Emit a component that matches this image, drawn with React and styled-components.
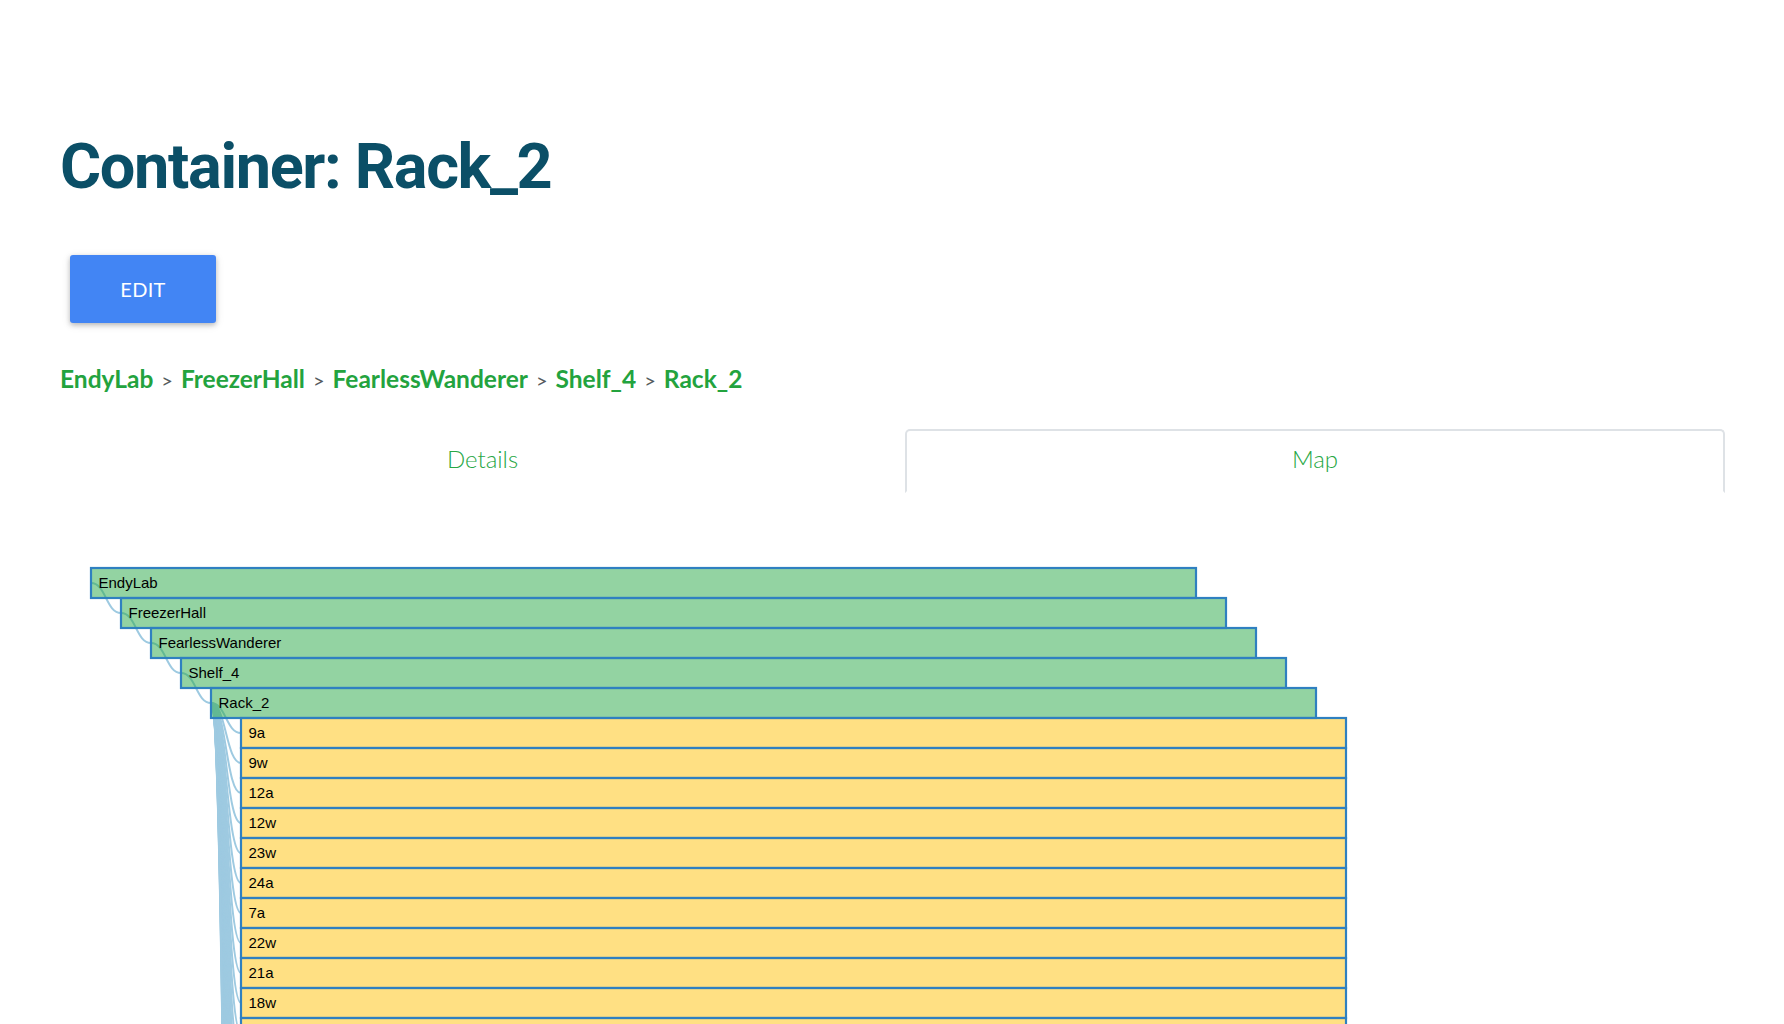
import React from "react";
import styled, { createGlobalStyle } from "styled-components";

const GlobalStyle = createGlobalStyle`
  html, body {
    margin: 0;
    padding: 0;
    background: #ffffff;
  }
  body {
    font-family: "Lato", "Liberation Sans", sans-serif;
  }
`;

const Page = styled.div`
  padding: 129px 59px 0 60px;
  box-sizing: border-box;
`;

const Title = styled.h1`
  margin: 0;
  font-family: "Roboto", "Liberation Sans", sans-serif;
  font-weight: 700;
  font-size: 63px;
  letter-spacing: -1.35px;
  line-height: 1.2;
  color: #0b4f67;
`;

const ButtonRow = styled.div`
  display: flex;
  margin-top: 50px;
  padding-left: 10px;
`;

const EditButton = styled.button`
  width: 146px;
  height: 68px;
  border: none;
  border-radius: 3px;
  background: #4285f4;
  color: #ffffff;
  font-family: "Lato", sans-serif;
  font-size: 20px;
  font-weight: 400;
  letter-spacing: 0.3px;
  box-shadow: 0 2px 5px rgba(0, 0, 0, 0.22), 0 2px 10px rgba(0, 0, 0, 0.1);
  cursor: pointer;
`;

const Crumbs = styled.nav`
  display: flex;
  align-items: baseline;
  margin-top: 38px;
  font-family: "Lato", sans-serif;
  line-height: 36px;
`;

const CrumbLink = styled.a`
  font-size: 24.5px;
  font-weight: 700;
  color: #23a33e;
  text-decoration: none;
`;

const CrumbSep = styled.span`
  font-size: 20px;
  font-weight: 400;
  color: #555b60;
  padding: 0 8px;
`;

const TabBar = styled.div`
  display: flex;
  margin-top: 31px;
  border-bottom: 2px solid #dee2e6;
`;

const Tab = styled.div`
  flex: 1 1 auto;
  text-align: center;
  font-family: "Lato", sans-serif;
  font-weight: 300;
  font-size: 24px;
  line-height: 36px;
  color: #28a745;
  padding: 10px 16px 14px;
  margin-bottom: -2px;
  border: 2px solid ${(p) => (p.$active ? "#dee2e6" : "transparent")};
  border-bottom-color: ${(p) => (p.$active ? "#ffffff" : "transparent")};
  border-radius: 5px 5px 0 0;
  background: #ffffff;
  cursor: pointer;
`;

const TreeSvg = styled.svg`
  display: block;
  margin-top: 60px;
  overflow: visible;
`;

const Link = styled.path`
  fill: none;
  stroke: #9ecae1;
  stroke-width: 2px;
`;

const NodeRect = styled.rect`
  fill: ${(p) => (p.$leaf ? "#ffc107" : "#28a745")};
  fill-opacity: 0.5;
  stroke: #2f80c0;
  stroke-width: 2.2px;
`;

const NodeLabel = styled.text`
  font-family: "Liberation Sans", Arial, sans-serif;
  font-size: 15px;
  fill: #000000;
`;

const path = ["EndyLab", "FreezerHall", "FearlessWanderer", "Shelf_4", "Rack_2"];
const children = [
  "9a", "9w", "12a", "12w", "23w", "24a", "7a", "22w", "21a", "18w",
  "18a", "3w", "3a", "5w", "5a", "14a", "14w", "1a", "1w", "2a",
  "2w", "4a", "4w", "6a", "6w", "8a", "8w", "10a", "10w", "11a",
  "11w", "13a", "13w", "15a", "15w", "16a", "16w", "17a", "17w", "19a",
];

const STEP = 30;
const BAR_H = 30;
const BAR_W = 1105;
const X0 = 31;
const Y0 = 15;

function buildNodes() {
  const nodes = [];
  path.forEach((name, i) => {
    nodes.push({ name, depth: i, index: i, leaf: false, parent: i > 0 ? i - 1 : null });
  });
  children.forEach((name, j) => {
    const idx = path.length + j;
    nodes.push({ name, depth: path.length, index: idx, leaf: true, parent: path.length - 1 });
  });
  return nodes;
}

function pos(n) {
  return { x: X0 + n.depth * STEP, y: Y0 + n.index * BAR_H + BAR_H / 2 };
}

function diagonal(s, t) {
  const m = (s.x + t.x) / 2;
  return `M${s.x},${s.y}C${m},${s.y} ${m},${t.y} ${t.x},${t.y}`;
}

function Tree() {
  const nodes = buildNodes();
  const height = Y0 * 2 + nodes.length * BAR_H;
  const width = X0 + path.length * STEP + BAR_W + 10;
  return (
    <TreeSvg width={width} height={height}>
      {nodes
        .filter((n) => n.parent !== null)
        .map((n) => (
          <Link key={`l-${n.index}`} d={diagonal(pos(nodes[n.parent]), pos(n))} />
        ))}
      {nodes.map((n) => {
        const p = pos(n);
        return (
          <g key={`n-${n.index}`} transform={`translate(${p.x},${p.y})`}>
            <NodeRect $leaf={n.leaf} x={0} y={-BAR_H / 2} width={BAR_W} height={BAR_H} />
            <NodeLabel x={7.5} y={4.8}>
              {n.name}
            </NodeLabel>
          </g>
        );
      })}
    </TreeSvg>
  );
}

export default function App() {
  return (
    <>
      <GlobalStyle />
      <Page>
        <Title>Container: Rack_2</Title>
        <ButtonRow>
          <EditButton>EDIT</EditButton>
        </ButtonRow>
        <Crumbs>
          {path.map((name, i) => (
            <React.Fragment key={name}>
              {i > 0 && <CrumbSep>&gt;</CrumbSep>}
              <CrumbLink href="#">{name}</CrumbLink>
            </React.Fragment>
          ))}
        </Crumbs>
        <TabBar>
          <Tab>Details</Tab>
          <Tab $active>Map</Tab>
        </TabBar>
        <Tree />
      </Page>
    </>
  );
}
